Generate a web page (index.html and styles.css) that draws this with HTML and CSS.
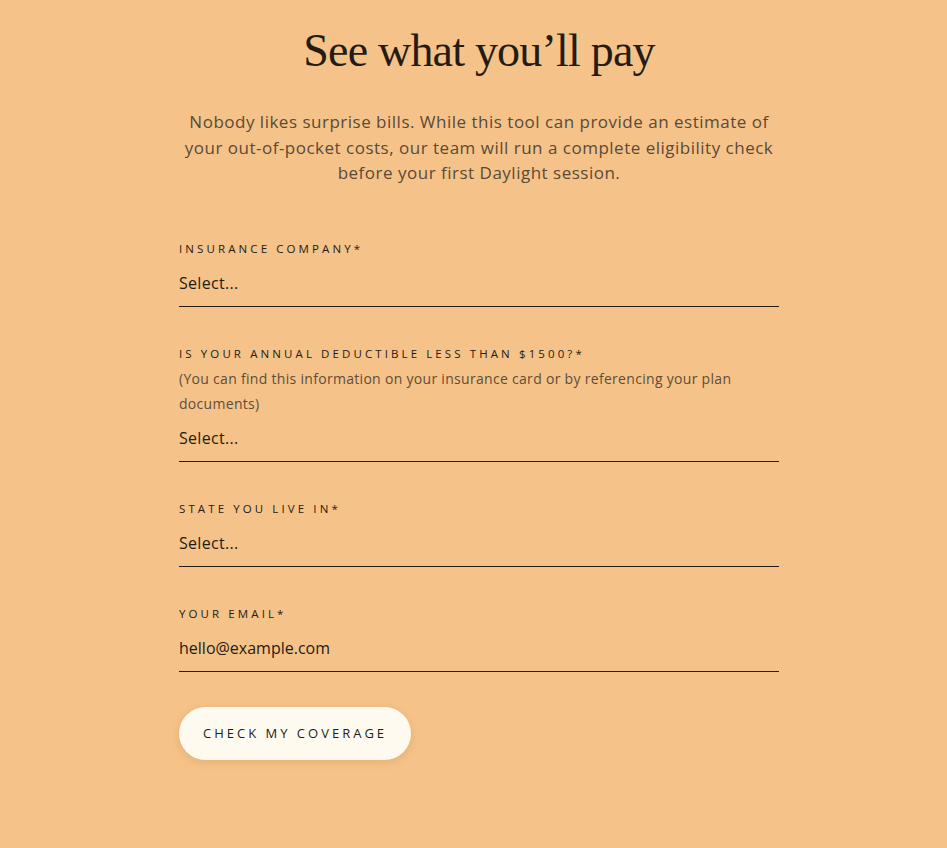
FILE: index.html
```html
<!DOCTYPE html>
<html lang="en">
<head>
    <meta charset="UTF-8">
    <meta name="viewport" content="width=device-width, initial-scale=1.0">
    <title>See what you'll pay</title>
    <link rel="stylesheet" href="styles.css">
</head>
<body>
    <div class="container">
        <h1>See what you’ll pay</h1>

        <p class="intro">
            Nobody likes surprise bills. While this tool can provide an estimate of<br>
            your out-of-pocket costs, our team will run a complete eligibility check<br>
            before your first Daylight session.
        </p>

        <form class="cost-form" onsubmit="return false;">
            <div class="field">
                <label for="insurance">Insurance company*</label>
                <div class="select" id="insurance">Select...</div>
            </div>

            <div class="field">
                <label for="deductible">Is your annual deductible less than $1500?*</label>
                <div class="hint">(You can find this information on your insurance card or by referencing your plan documents)</div>
                <div class="select" id="deductible">Select...</div>
            </div>

            <div class="field">
                <label for="state">State you live in*</label>
                <div class="select" id="state">Select...</div>
            </div>

            <div class="field">
                <label for="email">Your email*</label>
                <input type="email" id="email" placeholder="hello@example.com">
            </div>

            <button type="submit">Check my coverage</button>
        </form>
    </div>
</body>
</html>
```

FILE: styles.css
```css
body {
    background-color: #f5c389;
    font-family: "Open Sans", "Liberation Sans", sans-serif;
    color: #241c14;
    margin: 0;
}
.container {
    width: 600px;
    margin: 0 auto;
    padding: 24px 0 40px 11px;
}
h1 {
    font-family: "Liberation Serif", serif;
    font-weight: normal;
    font-size: 46px;
    letter-spacing: -0.8px;
    line-height: 54px;
    text-align: center;
    margin: 0 0 31px;
}
.intro {
    font-size: 17px;
    letter-spacing: 0.5px;
    line-height: 25.5px;
    color: #5a4a38;
    text-align: center;
    white-space: nowrap;
    margin: 0 0 55px;
}
.field {
    margin-bottom: 39px;
}
label {
    display: block;
    font-size: 11.5px;
    letter-spacing: 3.1px;
    text-transform: uppercase;
    line-height: 16px;
}
.hint {
    font-size: 14px;
    letter-spacing: 0.3px;
    line-height: 25px;
    color: #5e4d3a;
    margin: 4px 0 -4px;
}
.select,
input {
    display: block;
    width: 100%;
    box-sizing: border-box;
    font-family: inherit;
    font-size: 16px;
    color: #241c14;
    padding: 15px 0 12px;
    line-height: 22px;
    background: transparent;
    border: none;
    border-bottom: 1px solid #241c14;
    outline: none;
}
.select {
    letter-spacing: 0.3px;
}
input::placeholder {
    color: #241c14;
}
button {
    margin-top: -4px;
    padding: 0 24px;
    height: 53px;
    background-color: #fffaf0;
    color: #241c14;
    font-family: inherit;
    font-size: 13px;
    letter-spacing: 3px;
    text-transform: uppercase;
    border: none;
    border-radius: 27px;
    box-shadow: 0 2px 10px rgba(150, 90, 30, 0.2);
    cursor: pointer;
}
```
